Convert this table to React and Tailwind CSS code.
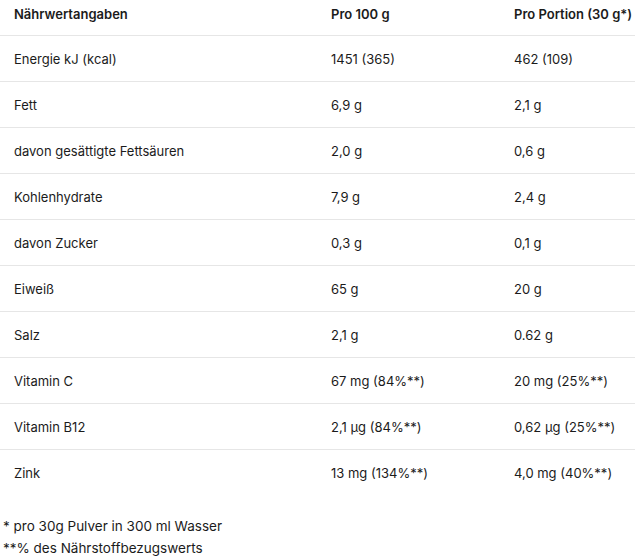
import React from "react";

const rows = [
  ["Energie kJ (kcal)", "1451 (365)", "462 (109)"],
  ["Fett", "6,9 g", "2,1 g"],
  ["davon gesättigte Fettsäuren", "2,0 g", "0,6 g"],
  ["Kohlenhydrate", "7,9 g", "2,4 g"],
  ["davon Zucker", "0,3 g", "0,1 g"],
  ["Eiweiß", "65 g", "20 g"],
  ["Salz", "2,1 g", "0.62 g"],
  ["Vitamin C", "67 mg (84%**)", "20 mg (25%**)"],
  ["Vitamin B12", "2,1 µg (84%**)", "0,62 µg (25%**)"],
  ["Zink", "13 mg (134%**)", "4,0 mg (40%**)"],
];

export default function App() {
  return (
    <div className="w-[635px] h-[559px] bg-white text-[#1b1b1b] font-['Inter','Noto_Sans',sans-serif] text-[13px] overflow-hidden">
      <div className="grid grid-cols-[331px_183px_1fr] h-[36px] border-b border-[#e6e6e6] font-semibold">
        <div className="pl-[14px] pt-[5px]">Nährwertangaben</div>
        <div className="pt-[5px]">Pro 100 g</div>
        <div className="pt-[5px]">Pro Portion (30 g*)</div>
      </div>
      {rows.map((r, i) => (
        <div
          key={i}
          className={`grid grid-cols-[331px_183px_1fr] items-center h-[46px] pt-[2px] ${
            i < rows.length - 1 ? "border-b border-[#e6e6e6]" : ""
          }`}
        >
          <div className="pl-[14px]">{r[0]}</div>
          <div>{r[1]}</div>
          <div>{r[2]}</div>
        </div>
      ))}
      <div className="mt-[19px] pl-[3px] text-[13.5px] leading-[22px]">
        <p>* pro 30g Pulver in 300 ml Wasser</p>
        <p>**% des Nährstoffbezugswerts</p>
      </div>
    </div>
  );
}
